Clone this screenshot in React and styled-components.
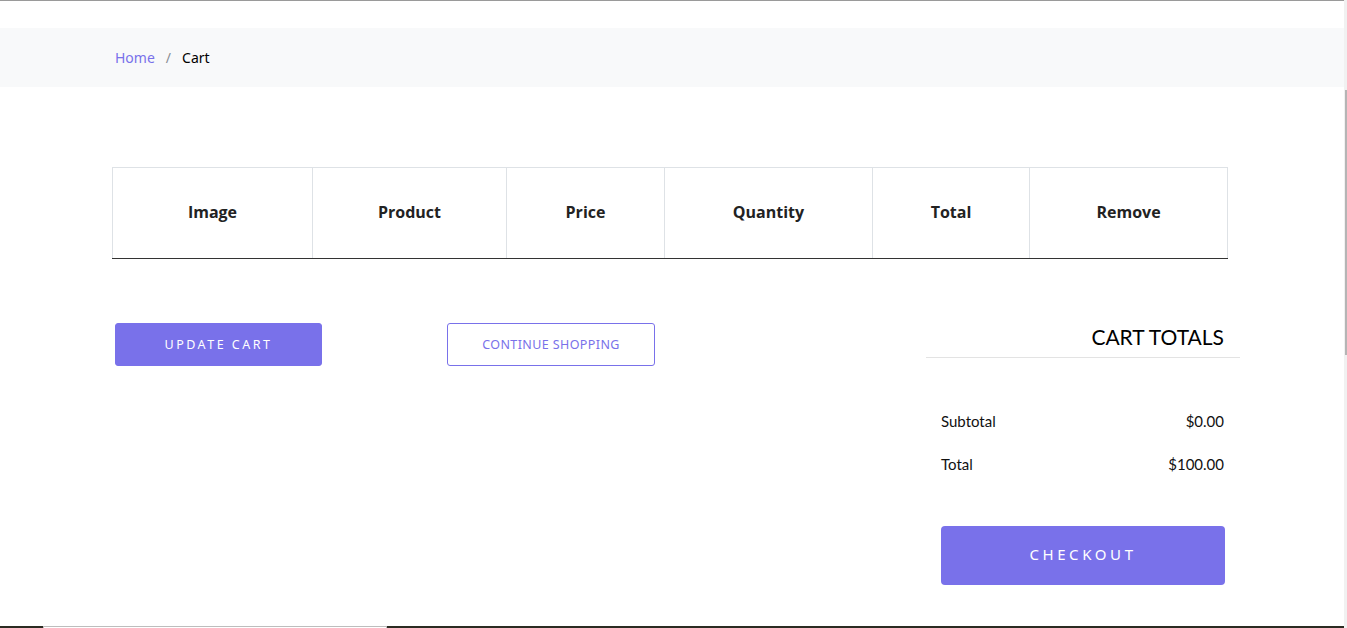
import styled, { createGlobalStyle } from "styled-components";

const GlobalStyle = createGlobalStyle`
  html, body {
    margin: 0;
    padding: 0;
    overflow: hidden;
    background: #fff;
  }
  body {
    font-family: "Noto Sans", "Open Sans", sans-serif;
    color: #212529;
  }
  * { box-sizing: border-box; }
`;

const headers = [
  { label: "Image", width: 200 },
  { label: "Product", width: 194 },
  { label: "Price", width: 158 },
  { label: "Quantity", width: 208 },
  { label: "Total", width: 157 },
  { label: "Remove", width: 198 },
];

const App = () => {
  return (
    <>
      <GlobalStyle />
      <Page>
        <TopRule />
        <BreadcrumbBar>
          <Container>
            <Crumbs>
              <CrumbLink href="#">Home</CrumbLink>
              <Slash>/</Slash>
              <CrumbCurrent>Cart</CrumbCurrent>
            </Crumbs>
          </Container>
        </BreadcrumbBar>

        <Section>
          <Container>
            <Table>
              <colgroup>
                {headers.map((h) => (
                  <col key={h.label} style={{ width: h.width }} />
                ))}
              </colgroup>
              <thead>
                <tr>
                  {headers.map((h) => (
                    <Th key={h.label}>{h.label}</Th>
                  ))}
                </tr>
              </thead>
            </Table>

            <BottomRow>
              <ButtonGroup>
                <PrimaryButton>Update Cart</PrimaryButton>
                <OutlineButton>Continue Shopping</OutlineButton>
              </ButtonGroup>

              <Totals>
                <TotalsTitle>Cart Totals</TotalsTitle>
                <TotalsBody>
                  <TotalsRow>
                    <span>Subtotal</span>
                    <span>$0.00</span>
                  </TotalsRow>
                  <TotalsRow>
                    <span>Total</span>
                    <span>$100.00</span>
                  </TotalsRow>
                  <CheckoutButton>Checkout</CheckoutButton>
                </TotalsBody>
              </Totals>
            </BottomRow>
          </Container>
        </Section>

        <Footer>
          <FooterBox />
        </Footer>
      </Page>
      <ScrollTrack>
        <ScrollThumb />
      </ScrollTrack>
    </>
  );
};

const Page = styled.div`
  width: 1344px;
  min-height: 628px;
`;

const TopRule = styled.div`
  height: 1px;
  background: #9a9a9a;
  margin-bottom: 27px;
`;

const BreadcrumbBar = styled.div`
  background: #f8f9fa;
  height: 59px;
  display: flex;
  align-items: center;
`;

const Container = styled.div`
  width: 1140px;
  margin: 0 auto;
`;

const Crumbs = styled.div`
  display: flex;
  align-items: center;
  padding-left: 13px;
  font-size: 14px;
`;

const CrumbLink = styled.a`
  color: #7971ea;
  text-decoration: none;
`;

const Slash = styled.span`
  color: #8a8f95;
  margin: 0 11px 0 11px;
`;

const CrumbCurrent = styled.span`
  color: #000;
`;

const Section = styled.div`
  padding-top: 80px;
`;

const Table = styled.table`
  margin-left: 10px;
  width: 1115px;
  border-collapse: collapse;
  table-layout: fixed;
`;

const Th = styled.th`
  height: 91px;
  border: 1px solid #dee2e6;
  border-bottom: 1px solid #333;
  font-family: "Open Sans", "Noto Sans", sans-serif;
  font-weight: 700;
  font-size: 16px;
  color: #222;
  text-align: center;
  vertical-align: middle;
  padding: 0 0 2px;
`;

const BottomRow = styled.div`
  display: flex;
  justify-content: space-between;
  align-items: flex-start;
  margin-top: 64px;
  padding: 0 2px 0 13px;
`;

const ButtonGroup = styled.div`
  display: flex;
  gap: 125px;
`;

const BaseButton = styled.button`
  height: 43px;
  width: 207px;
  border-radius: 3px;
  font-family: "Noto Sans", sans-serif;
  font-size: 12.5px;
  text-transform: uppercase;
  cursor: pointer;
`;

const PrimaryButton = styled(BaseButton)`
  background: #7971ea;
  border: 1px solid #7971ea;
  color: #fff;
  letter-spacing: 2.5px;
`;

const OutlineButton = styled(BaseButton)`
  width: 208px;
  background: #fff;
  border: 1px solid #7971ea;
  color: #7971ea;
  letter-spacing: 0.4px;
`;

const Totals = styled.div`
  width: 314px;
`;

const TotalsTitle = styled.h3`
  margin: 0;
  padding: 0 16px 6px 0;
  border-bottom: 1px solid #e3e3e3;
  text-align: right;
  text-transform: uppercase;
  font-family: "Lato", "Noto Sans", sans-serif;
  font-weight: 400;
  font-size: 21px;
  line-height: 28px;
  color: #000;
`;

const TotalsBody = styled.div`
  padding: 52px 16px 0 15px;
  display: flex;
  flex-direction: column;
`;

const TotalsRow = styled.div`
  display: flex;
  justify-content: space-between;
  font-family: "Lato", "Noto Sans", sans-serif;
  font-size: 15px;
  line-height: 22px;
  color: #111;
  margin-bottom: 21px;
`;

const CheckoutButton = styled.button`
  margin-top: 30px;
  width: 284px;
  height: 59px;
  padding: 0 0 4px;
  border: none;
  border-radius: 4px;
  background: #7971ea;
  color: #fff;
  font-family: "Noto Sans", sans-serif;
  font-size: 15px;
  letter-spacing: 3.6px;
  text-transform: uppercase;
  cursor: pointer;
`;

const Footer = styled.div`
  margin-top: 41px;
  height: 60px;
  background: #2b2b22;
  padding-left: 43px;
`;

const FooterBox = styled.div`
  width: 344px;
  height: 40px;
  background: #fff;
  border: 1px solid #bdbdbd;
`;

const ScrollTrack = styled.div`
  position: fixed;
  top: 0;
  right: 0;
  width: 3px;
  height: 100vh;
  background: #f1f1f1;
`;

const ScrollThumb = styled.div`
  margin-top: 90px;
  width: 2px;
  margin-left: 1px;
  height: 265px;
  background: #b5b5b5;
`;

export default App;
